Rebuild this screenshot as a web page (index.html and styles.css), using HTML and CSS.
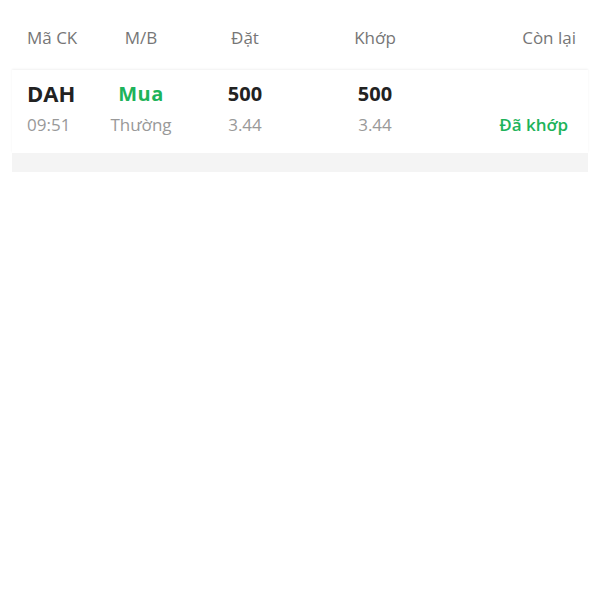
FILE: index.html
```html
<!DOCTYPE html>
<html>
<head>
  <meta charset="utf-8">
  <title>Sổ lệnh</title>
  <link rel="stylesheet" href="styles.css">
</head>
<body>
  <div class="order-book">
    <div class="cols head">
      <span class="c-code">Mã CK</span>
      <span class="c-side">M/B</span>
      <span class="c-mid">Đặt</span>
      <span class="c-mid">Khớp</span>
      <span class="c-end">Còn lại</span>
    </div>

    <div class="order-card">
      <div class="cols line-main">
        <span class="c-code">DAH</span>
        <span class="c-side buy">Mua</span>
        <span class="c-mid">500</span>
        <span class="c-mid">500</span>
        <span class="c-end"></span>
      </div>
      <div class="cols line-sub">
        <span class="c-code">09:51</span>
        <span class="c-side">Thường</span>
        <span class="c-mid">3.44</span>
        <span class="c-mid">3.44</span>
        <span class="c-end status">Đã khớp</span>
      </div>
    </div>
    <div class="card-foot"></div>
  </div>
</body>
</html>
```

FILE: styles.css
```css
body {
  margin: 0;
  padding: 0;
  background-color: #ffffff;
  font-family: "Open Sans", "Noto Sans", sans-serif;
}

.order-book {
  padding: 0 12px;
}

.cols {
  display: grid;
  grid-template-columns: 70px 88px 120px 140px 1fr;
  align-items: center;
  padding: 0 12px 0 15px;
}

.c-side,
.c-mid {
  text-align: center;
}

.c-end {
  text-align: right;
}

.head {
  box-sizing: border-box;
  height: 70px;
  padding-top: 4px;
  font-size: 17px;
  color: #767676;
}

.order-card {
  background-color: #ffffff;
  box-shadow: 0 -1px 2px rgba(0, 0, 0, 0.06);
  padding: 8px 0 10px;
}

.line-main {
  height: 28px;
  font-size: 20px;
  font-weight: 700;
  color: #222222;
}

.line-main .c-code {
  font-size: 22px;
}

.line-sub {
  height: 37px;
  font-size: 17px;
  color: #999999;
}

.buy {
  color: #1db35a;
  letter-spacing: 0.5px;
}

.status {
  color: #1db35a;
  font-weight: 600;
  padding-right: 8px;
}

.card-foot {
  height: 19px;
  background-color: #f4f4f4;
}
```
